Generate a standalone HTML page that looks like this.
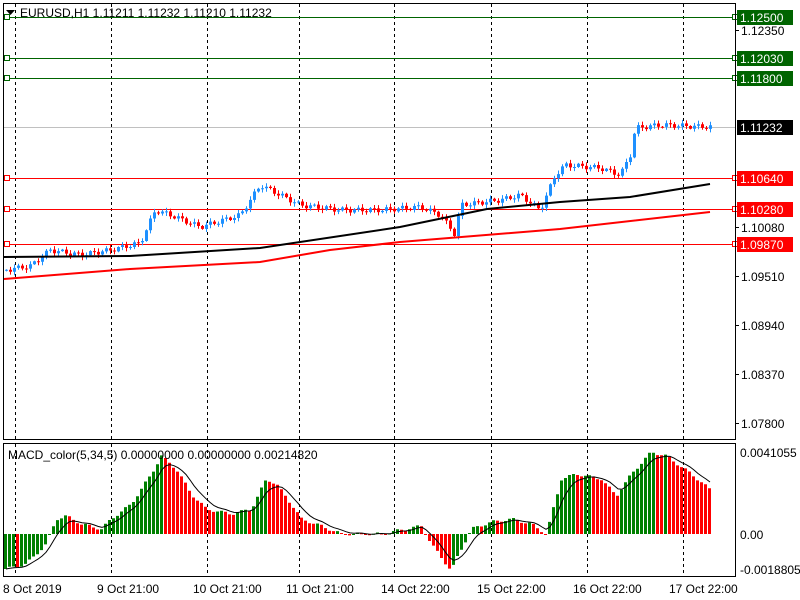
<!DOCTYPE html>
<html><head><meta charset="utf-8"><style>
html,body{margin:0;padding:0;background:#fff;width:800px;height:600px;overflow:hidden}
svg{display:block;font-family:"Liberation Sans",sans-serif}
</style></head><body>
<svg id="s" width="800" height="600" xmlns="http://www.w3.org/2000/svg">
<rect width="800" height="600" fill="#fff"/>
<g id="grid"></g>
<g id="lines"></g>
<path id="wb" fill="none" stroke="#1e90ff" stroke-width="1"/>
<path id="wr" fill="none" stroke="#ff0000" stroke-width="1"/>
<path id="bb" fill="#1e90ff"/>
<path id="br" fill="#ff0000"/>
<g id="mas"></g>
<path id="mg" fill="#008000"/>
<path id="mr" fill="#ff0000"/>
<polyline id="sg" fill="none" stroke="#000" stroke-width="1"/>
<rect x="3.5" y="3.5" width="732" height="436" fill="none" stroke="#000"/>
<rect x="3.5" y="443.5" width="732" height="133" fill="none" stroke="#000"/>
<g font-size="12" fill="#000">
<path d="M6 10 h9 l-4.5 5z" fill="#000"/>
<text x="20" y="17">EURUSD,H1  1.11211 1.11232 1.11210 1.11232</text>
<text x="8" y="459">MACD_color(5,34,5) 0.00000000 0.00000000 0.00214820</text>
</g>
<g id="axis" font-size="12"></g>
</svg>
<script>
(function(){
var NS="http://www.w3.org/2000/svg";
function el(p,tg,a){var e=document.createElementNS(NS,tg);for(var k in a)e.setAttribute(k,a[k]);document.getElementById(p).appendChild(e);return e;}
function interp(pts,x){if(x<=pts[0][0])return pts[0][1];for(var i=0;i<pts.length-1;i++){if(x<=pts[i+1][0]){var f=(x-pts[i][0])/(pts[i+1][0]-pts[i][0]);return pts[i][1]+f*(pts[i+1][1]-pts[i][1]);}}return pts[pts.length-1][1];}
function r(v){return (Math.round(v*10)/10).toString();}
[15,111,207,299,394,491,587,683].forEach(function(x){
 el("grid","line",{x1:x+.5,y1:4,x2:x+.5,y2:439,stroke:"#000","stroke-dasharray":"3,3"});
 el("grid","line",{x1:x+.5,y1:444,x2:x+.5,y2:576,stroke:"#000","stroke-dasharray":"3,3"});
});
var lv=[[17,"#006400","1.12500"],[58,"#006400","1.12030"],[78,"#006400","1.11800"],[178,"#ff0000","1.10640"],[209,"#ff0000","1.10280"],[244,"#ff0000","1.09870"]];
el("lines","line",{x1:4,y1:127.5,x2:735,y2:127.5,stroke:"#c0c0c0"});
lv.forEach(function(l){
 el("lines","line",{x1:4,y1:l[0]+.5,x2:735,y2:l[0]+.5,stroke:l[1]});
 el("lines","rect",{x:4.5,y:l[0]-2.5,width:5,height:5,fill:"#fff",stroke:l[1]});
 el("lines","rect",{x:732.5,y:l[0]-2.5,width:5,height:5,fill:"#fff",stroke:l[1]});
 el("axis","rect",{x:737,y:l[0]-7,width:56,height:15,fill:l[1]});
 var q=el("axis","text",{x:740,y:l[0]+5,fill:"#fff"});q.textContent=l[2];
});
el("axis","rect",{x:737,y:120,width:56,height:15,fill:"#000"});
var q0=el("axis","text",{x:740,y:132,fill:"#fff"});q0.textContent="1.11232";
[[30,"1.12350"],[227,"1.10080"],[276,"1.09510"],[325,"1.08940"],[374,"1.08370"],[423,"1.07800"]].forEach(function(a){
 el("axis","line",{x1:735,y1:a[0]+.5,x2:739,y2:a[0]+.5,stroke:"#000"});
 var q=el("axis","text",{x:741,y:a[0]+5,fill:"#000"});q.textContent=a[1];});
[[534,"0.00"],[452,"0.0041055"],[569,"-0.0018805"]].forEach(function(a){
 var q=el("axis","text",{x:740,y:a[0]+5,fill:"#000"});q.textContent=a[1];});
[[3,"8 Oct 2019"],[97,"9 Oct 21:00"],[193,"10 Oct 21:00"],[286,"11 Oct 21:00"],[381,"14 Oct 22:00"],[477,"15 Oct 22:00"],[573,"16 Oct 22:00"],[669,"17 Oct 22:00"]].forEach(function(a){
 var q=el("axis","text",{x:a[0],y:593,fill:"#000"});q.textContent=a[1];});
function poly(pts,c){el("mas","polyline",{points:pts.map(function(p){return p.join(",")}).join(" "),fill:"none",stroke:c,"stroke-width":2});}
poly([[4,257],[130,256],[260,248],[400,227],[487,209],[560,202],[630,197],[710,184]],"#000");
poly([[4,279],[130,269],[260,262],[330,250],[400,242],[560,229],[710,212]],"#ff0000");
var cp=[[5,270],[30,266],[50,250],[80,255],[110,250],[140,243],[155,210],[170,215],[200,227],[240,215],[260,185],[280,195],[300,205],[340,210],[380,210],[420,207],[440,215],[455,235],[460,205],[500,200],[520,195],[540,210],[555,175],[565,165],[600,168],[620,175],[630,155],[635,128],[660,125],[710,127]];
var wb="",wr="",bb="",br="";
var prev=interp(cp,4);
for(var i=0;i<177;i++){
 var x=6+i*4;
 var c=interp(cp,x)+Math.sin(i*1.7)*2.5, o=prev;
 var up=c<o;
 var hi=Math.min(o,c),lo=Math.max(o,c);if(lo-hi<1)lo=hi+1;
 var w=1+Math.abs(Math.sin(i*0.9))*5;
 var wick="M"+r(x+.5)+" "+r(hi-w*0.6)+"V"+r(lo+w*0.6);
 var body="M"+(x-1)+" "+r(hi)+"h3V"+r(lo)+"h-3Z";
 if(up){wb+=wick;bb+=body;}else{wr+=wick;br+=body;}
 prev=c;
}
document.getElementById("wb").setAttribute("d",wb);
document.getElementById("wr").setAttribute("d",wr);
document.getElementById("bb").setAttribute("d",bb);
document.getElementById("br").setAttribute("d",br);
var mp=[[5,-35],[25,-30],[45,-10],[55,15],[65,18],[80,10],[100,5],[110,15],[130,30],[150,60],[160,78],[175,65],[190,40],[205,25],[230,20],[250,25],[265,55],[275,50],[290,30],[300,15],[320,8],[340,0],[380,0],[420,8],[430,-10],[450,-37],[455,-25],[470,5],[490,12],[510,15],[530,10],[545,0],[560,55],[575,60],[600,55],[615,38],[630,60],[650,82],[665,78],[690,60],[708,45]];
var pv=null,sig=[],s=null,mg="",mr="";
for(var j=0;j<177;j++){
 var xx=4+j*4;
 var v=interp(mp,xx)+Math.sin(j*1.3)*1.5;
 var h=Math.max(1,Math.abs(v));
 var y0=v>0?534-v:534;
 var d="M"+xx+" "+r(y0)+"h3v"+r(h)+"h-3Z";
 if(pv===null||v>=pv)mg+=d;else mr+=d;
 s=s===null?v:s+(v-s)*0.33;sig.push(r(xx+2)+","+r(534-s));pv=v;
}
document.getElementById("mg").setAttribute("d",mg);
document.getElementById("mr").setAttribute("d",mr);
document.getElementById("sg").setAttribute("points",sig.join(" "));
})();
</script>
</body></html>
